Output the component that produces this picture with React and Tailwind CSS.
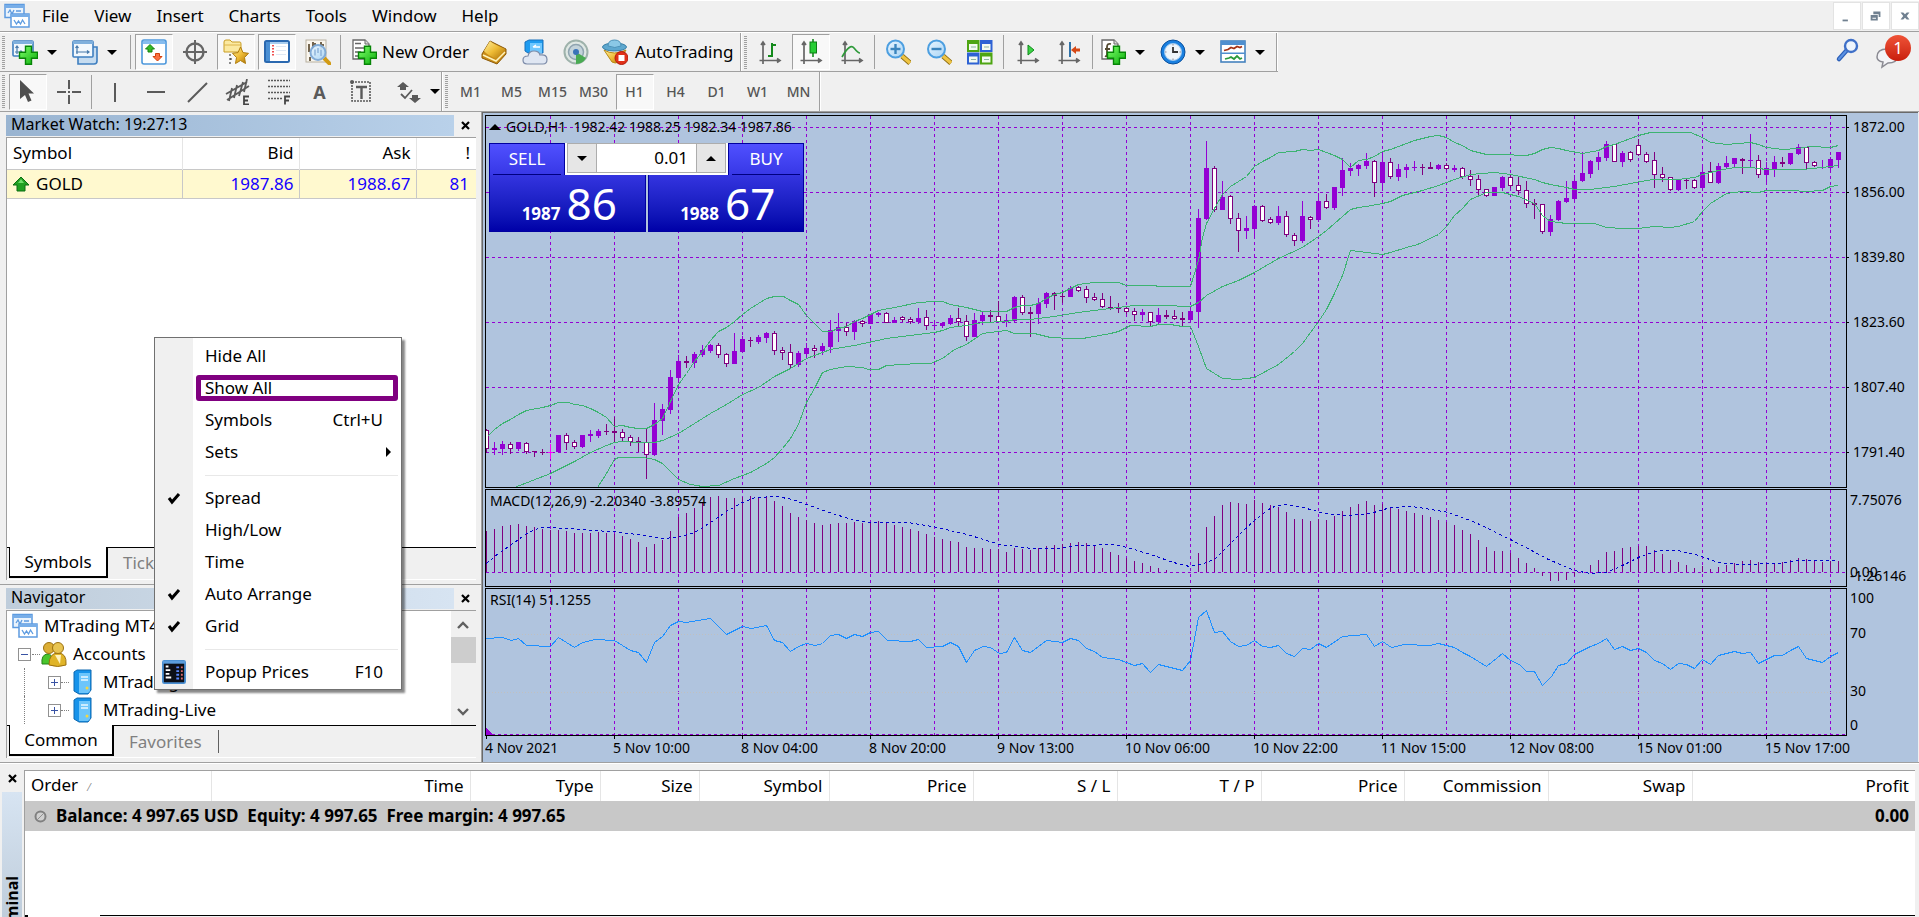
import React, { useState } from "react";

// [kind, high, body top, body bottom, low], one bar every 8px
const candles = [
  [0, 429, 430, 449, 453], [1, 442, 448, 450, 455], [1, 441, 444, 449, 455], [0, 442, 444, 449, 454], [1, 442, 442, 449, 451],
  [0, 442, 443, 452, 454], [0, 451, 451, 452, 457], [0, 449, 452, 453, 455], [2, 444, 452, 453, 459], [1, 435, 435, 452, 452],
  [0, 433, 435, 443, 450], [0, 440, 442, 447, 449], [1, 435, 435, 447, 448], [1, 430, 434, 436, 442], [1, 429, 431, 436, 438],
  [0, 424, 431, 432, 435], [0, 417, 431, 433, 442], [0, 429, 432, 438, 441], [0, 435, 437, 442, 446], [0, 437, 441, 442, 452],
  [0, 429, 442, 455, 479], [1, 403, 420, 455, 456], [1, 404, 409, 421, 435], [1, 370, 377, 410, 414], [1, 355, 361, 378, 383],
  [0, 356, 361, 363, 368], [1, 352, 354, 363, 368], [1, 345, 350, 355, 357], [1, 344, 345, 351, 353], [0, 343, 345, 355, 358],
  [0, 353, 354, 364, 367], [1, 333, 351, 364, 364], [1, 336, 339, 352, 352], [0, 337, 340, 341, 347], [1, 335, 337, 342, 344],
  [1, 332, 333, 338, 343], [0, 331, 333, 351, 355], [0, 347, 350, 353, 360], [0, 344, 352, 365, 368], [1, 351, 353, 365, 367],
  [1, 343, 348, 354, 359], [0, 345, 348, 351, 358], [1, 343, 346, 351, 355], [1, 320, 330, 347, 353], [1, 313, 327, 331, 342],
  [0, 323, 327, 332, 336], [1, 320, 321, 332, 340], [0, 320, 321, 324, 327], [1, 314, 314, 324, 324], [1, 312, 313, 315, 317],
  [0, 312, 313, 323, 323], [1, 317, 320, 323, 323], [0, 316, 317, 320, 322], [0, 317, 319, 322, 324], [1, 308, 318, 322, 324],
  [0, 310, 317, 326, 330], [1, 321, 325, 326, 330], [1, 322, 323, 326, 328], [1, 315, 318, 324, 325], [0, 308, 318, 322, 326],
  [0, 315, 321, 337, 341], [1, 313, 320, 337, 337], [1, 312, 315, 321, 325], [0, 310, 315, 317, 322], [0, 301, 316, 322, 322],
  [1, 314, 320, 322, 327], [1, 296, 297, 321, 322], [0, 295, 297, 313, 315], [0, 307, 312, 314, 337], [1, 298, 303, 314, 324],
  [1, 292, 293, 304, 308], [0, 292, 293, 296, 310], [0, 293, 296, 297, 303], [1, 286, 288, 297, 297], [0, 286, 287, 291, 292],
  [0, 286, 289, 298, 303], [0, 293, 297, 300, 301], [0, 293, 299, 307, 308], [0, 296, 307, 309, 310], [0, 303, 308, 309, 313],
  [0, 307, 308, 312, 314], [0, 308, 311, 315, 321], [1, 309, 312, 315, 321], [0, 312, 312, 322, 326], [1, 308, 315, 322, 324],
  [0, 310, 315, 317, 319], [0, 310, 316, 319, 320], [0, 312, 318, 320, 326], [1, 307, 311, 320, 322], [1, 209, 218, 312, 328],
  [1, 141, 168, 219, 220], [0, 166, 168, 210, 212], [1, 181, 197, 210, 210], [0, 195, 196, 219, 224], [0, 213, 218, 231, 252],
  [1, 216, 228, 231, 239], [1, 205, 206, 229, 237], [0, 205, 206, 221, 222], [0, 217, 219, 223, 224], [1, 206, 216, 223, 225],
  [0, 211, 216, 235, 237], [0, 233, 235, 241, 246], [1, 201, 216, 241, 243], [0, 216, 217, 220, 229], [1, 193, 201, 220, 222],
  [0, 194, 201, 208, 209], [1, 187, 187, 208, 210], [1, 158, 170, 188, 196], [1, 163, 168, 171, 176], [1, 164, 165, 169, 176],
  [1, 153, 161, 166, 169], [0, 160, 161, 183, 197], [1, 152, 162, 183, 190], [0, 158, 162, 177, 179], [1, 164, 169, 177, 181],
  [1, 164, 167, 170, 178], [1, 161, 167, 168, 171], [0, 164, 167, 168, 175], [0, 162, 167, 169, 169], [1, 164, 165, 169, 170],
  [0, 163, 165, 169, 170], [1, 165, 168, 170, 172], [0, 167, 168, 177, 179], [0, 170, 176, 180, 186], [0, 175, 179, 190, 195],
  [0, 189, 189, 196, 197], [1, 187, 187, 196, 196], [1, 176, 177, 188, 191], [0, 175, 177, 186, 188], [0, 177, 185, 191, 195],
  [0, 181, 190, 204, 208], [0, 199, 203, 205, 219], [0, 204, 204, 232, 234], [1, 215, 219, 232, 236], [1, 200, 201, 220, 221],
  [1, 181, 198, 202, 203], [1, 175, 181, 199, 201], [1, 152, 173, 181, 182], [1, 160, 161, 174, 178], [1, 152, 157, 162, 170],
  [1, 141, 144, 158, 161], [0, 144, 144, 162, 162], [1, 151, 153, 162, 167], [0, 151, 152, 160, 162], [0, 139, 145, 155, 156],
  [0, 152, 154, 162, 163], [0, 152, 160, 175, 188], [0, 167, 174, 178, 182], [0, 177, 177, 190, 191], [1, 179, 180, 190, 191],
  [0, 179, 180, 181, 189], [0, 179, 180, 188, 189], [1, 167, 172, 188, 191], [0, 162, 171, 183, 183], [1, 163, 166, 183, 184],
  [1, 156, 163, 167, 169], [1, 158, 158, 164, 167], [0, 158, 159, 161, 174], [1, 134, 160, 161, 167], [0, 155, 160, 175, 178],
  [1, 162, 168, 175, 184], [1, 156, 162, 169, 177], [0, 157, 162, 164, 167], [1, 153, 153, 164, 165], [1, 144, 147, 154, 155],
  [0, 147, 147, 163, 169], [0, 161, 162, 166, 167], [1, 160, 167, 168, 169], [1, 157, 159, 168, 171], [1, 152, 152, 160, 168],
];

const upperBand =
  "487,436 494,429 502,423 510,419 518,414 526,410 542,407 550,405 558,402 568,402 574,404 582,405 590,408 598,412 606,417 614,426 622,425 630,427 638,428 646,428 654,424 662,418 670,401 678,384 686,373 694,361 702,351 710,340 718,331 726,327 734,321 742,314 750,308 758,303 766,298 774,296 783,296 790,300 798,304 806,315 814,323 822,331 830,331 838,328 846,326 854,321 862,318 870,314 878,310 894,307 918,302 934,301 942,301 950,304 966,307 982,311 1006,311 1014,307 1022,305 1030,305 1038,303 1046,298 1054,294 1062,292 1070,288 1078,284 1094,282 1118,282 1126,285 1154,285 1158,286 1190,286 1194,273 1198,260 1202,237 1206,223 1214,208 1222,194 1230,186 1238,181 1246,176 1254,166 1262,161 1270,157 1278,152 1294,151 1302,149 1310,150 1318,149 1326,152 1334,155 1342,159 1350,167 1358,160 1366,159 1374,156 1382,151 1390,149 1406,143 1414,140 1430,136 1438,135 1446,137 1454,142 1462,145 1470,150 1478,152 1486,154 1510,154 1517,155 1526,155 1534,153 1542,149 1550,147 1558,148 1566,150 1582,153 1598,150 1606,146 1614,144 1622,141 1630,138 1638,135 1650,132 1690,132 1702,137 1710,142 1726,144 1750,142 1758,144 1766,147 1782,149 1798,148 1810,146 1830,147 1838,145";
const middleBand =
  "514,487 550,473 574,461 590,452 606,445 614,442 622,441 638,442 654,442 662,440 678,433 694,423 710,413 726,404 742,394 758,387 774,376 790,368 806,358 830,349 854,345 886,338 910,335 934,332 942,330 950,327 966,325 982,322 1006,321 1014,319 1030,319 1054,316 1078,312 1102,309 1134,305 1170,305 1182,306 1190,306 1198,302 1206,295 1222,286 1238,280 1254,272 1278,258 1302,247 1318,236 1326,230 1342,216 1350,209 1358,207 1366,206 1382,203 1390,201 1402,195 1422,190 1438,185 1454,179 1470,174 1494,172 1510,174 1534,179 1542,182 1550,184 1566,187 1574,189 1590,189 1614,186 1630,183 1646,180 1654,179 1678,179 1694,177 1702,174 1718,170 1734,167 1750,167 1766,169 1802,169 1822,167 1838,165";
const lowerBand =
  "597,487 606,473 614,459 618,457 643,457 654,459 662,463 670,471 678,479 690,484 702,486 718,485 734,478 750,472 766,463 774,457 782,448 790,438 798,424 806,402 814,388 822,372 830,369 846,366 862,367 868,369 878,369 886,365 918,363 930,363 942,358 954,349 966,344 982,333 1006,330 1014,333 1034,333 1050,337 1070,338 1082,338 1094,336 1110,333 1118,331 1130,325 1150,326 1158,324 1170,324 1182,326 1190,326 1198,346 1206,368 1222,378 1238,379 1254,377 1278,364 1294,351 1302,343 1318,321 1326,309 1334,293 1342,275 1350,250 1366,252 1382,254 1390,252 1406,247 1417,244 1438,234 1446,226 1454,215 1462,208 1470,199 1486,192 1502,192 1518,196 1534,203 1542,215 1550,221 1566,223 1594,223 1606,227 1622,228 1638,228 1654,226 1670,227 1678,226 1694,221 1702,211 1710,203 1726,193 1742,191 1758,192 1766,190 1790,190 1806,191 1822,190 1830,186 1838,185";

// histogram heights around the zero line
const macd = [
  41, 43, 46, 47, 48, 46, 45, 43, 42, 42, 41, 39, 39, 39, 40, 39, 38, 36, 33, 30, 25, 28, 32, 41, 55, 59, 64, 70, 75, 76, 74, 74, 75, 76,
  75, 75, 71, 66, 59, 55, 52, 49, 47, 48, 49, 49, 50, 49, 49, 51, 49, 47, 45, 43, 41, 38, 35, 33, 31, 30, 25, 24, 24, 23, 23, 20, 24, 23,
  22, 24, 26, 27, 28, 29, 30, 29, 27, 24, 20, 17, 14, 11, 9, 6, 4, 2, 0, 0, 0, 19, 45, 56, 67, 70, 69, 68, 72, 69, 67, 65, 60, 53, 53,
  51, 53, 52, 56, 61, 65, 68, 71, 67, 68, 65, 63, 61, 59, 57, 55, 52, 50, 47, 42, 38, 32, 25, 21, 21, 19, 14, 9, 4, -4, -9, -9, -8, -4,
  0, 7, 12, 20, 21, 24, 25, 26, 26, 22, 18, 12, 10, 7, 4, 6, 3, 5, 7, 9, 11, 12, 10, 9, 9, 10, 12, 14, 13, 12, 10, 11, 11,
];
const macdSignal =
  "486,563 498,553 514,542 526,533 540,527 572,528 590,530 613,531 636,534 661,538 677,537 694,532 710,522 726,511 742,502 755,497 776,496 792,499 806,504 829,512 854,520 870,522 907,522 932,526 967,534 999,544 1031,548 1056,548 1077,545 1114,544 1127,547 1150,554 1173,562 1189,566 1200,564 1214,559 1228,545 1241,532 1255,519 1271,507 1283,504 1299,506 1324,513 1347,515 1370,513 1390,507 1411,506 1425,508 1448,512 1475,522 1512,540 1548,559 1574,570 1590,573 1606,572 1622,565 1640,556 1658,550 1677,550 1695,554 1718,562 1741,564 1778,563 1796,560 1837,560";
const rsi =
  "486,638 502,637 511,640 518,638 526,645 550,646 558,637 574,647 582,642 595,639 614,640 630,650 638,652 646,662 654,642 662,636 670,625 678,621 686,622 710,618 726,634 742,626 751,628 766,625 774,640 782,642 790,651 798,646 806,643 815,645 822,643 830,635 838,634 846,638 854,634 862,636 870,632 878,631 887,640 910,641 918,639 926,647 942,646 950,642 958,646 966,662 974,650 983,646 990,647 999,653 1006,652 1014,637 1022,650 1030,652 1046,640 1062,642 1070,638 1078,640 1086,648 1094,651 1102,657 1118,659 1134,665 1142,663 1150,672 1158,664 1182,670 1190,660 1198,617 1206,610 1214,632 1222,631 1230,641 1238,646 1246,645 1254,640 1262,646 1270,647 1278,645 1286,653 1294,656 1302,648 1310,649 1318,643 1326,647 1342,636 1366,634 1374,646 1382,641 1391,647 1404,644 1429,645 1438,643 1454,647 1462,652 1470,656 1486,666 1502,653 1510,660 1519,664 1526,671 1534,671 1542,685 1551,676 1558,665 1566,663 1574,654 1590,646 1598,643 1606,638 1614,649 1622,646 1630,650 1638,648 1646,652 1654,660 1662,663 1670,669 1678,663 1686,664 1694,668 1702,659 1710,664 1718,655 1734,651 1742,653 1750,652 1758,663 1774,655 1782,655 1790,650 1798,646 1806,658 1822,662 1830,656 1838,652";

const Icon = ({ size = 26, children }) => (
  <svg width={size} height={size} viewBox="0 0 26 26" className="shrink-0" aria-hidden="true">
    <defs>
      <linearGradient id="gold" x1="0" y1="0" x2="1" y2="1">
        <stop offset="0" stopColor="#fff0a0" />
        <stop offset="0.5" stopColor="#eebb35" />
        <stop offset="1" stopColor="#a86d05" />
      </linearGradient>
      <linearGradient id="green" x1="0" y1="0" x2="1" y2="1">
        <stop offset="0" stopColor="#7dff6a" />
        <stop offset="1" stopColor="#0cae0c" />
      </linearGradient>
      <linearGradient id="sky" x1="0" y1="0" x2="1" y2="1">
        <stop offset="0" stopColor="#eaf6ff" />
        <stop offset="1" stopColor="#a8d4f5" />
      </linearGradient>
    </defs>
    {children}
  </svg>
);

const Plus = () => (
  <path d="M14 7h6v6h6v6h-6v6h-6v-6H8v-6h6z" fill="url(#green)" stroke="#078507" strokeWidth="1.4" transform="translate(-.5 .3)" />
);

const NewChartIcon = () => (
  <Icon>
    <rect x="1" y="2" width="20" height="15" rx="1" fill="#f2f8fd" stroke="#3f7fc0" strokeWidth="1.6" />
    <path d="M1 2h20v3H1z" fill="#7fb0dd" />
    <path d="M5 7v8M3.500 9 5 7l1.500 2M3 13h7M8.500 11.500 10 13l-1.500 1.500" stroke="#4779aa" strokeWidth="1.200" fill="none" />
    <Plus />
  </Icon>
);
const ProfilesIcon = () => (
  <Icon>
    <path d="M21 8h4v14q0 3-3 3H6v-7z" fill="#c6dcf0" stroke="#3f7fc0" strokeWidth="1.600" />
    <rect x="1" y="2" width="20" height="16" rx="1" fill="#f2f8fd" stroke="#3f7fc0" strokeWidth="1.600" />
    <path d="M1 2h20v3H1z" fill="#7fb0dd" />
    <path d="M5 7v8M3.500 9 5 7l1.500 2M4 13h13M15 11.500l2 1.500-2 1.500" stroke="#4779aa" strokeWidth="1.200" fill="none" />
  </Icon>
);
const MarketIcon = () => (
  <Icon>
    <rect x="1" y="1" width="24" height="24" rx="2" fill="#fff" stroke="#4d98dc" strokeWidth="1.600" />
    <path d="M2 2h22v3H2z" fill="#86bdf0" />
    <path d="m9 5.500 4.500 4.500h-2.500v3H7v-3H4.500z" fill="#35b925" stroke="#158010" />
    <path d="m16.500 22-4.500-4.500h2.500v-3h4v3H21z" fill="#fb7040" stroke="#d33f0c" />
  </Icon>
);
const CrosshairIcon = () => (
  <Icon>
    <circle cx="13" cy="13" r="8.500" fill="none" stroke="#666" strokeWidth="2.400" />
    <path d="M13 1v9M13 16v9M1 13h9M16 13h9M10 13h6M13 10v6" stroke="#666" strokeWidth="2" />
  </Icon>
);
const FavoritesIcon = () => (
  <Icon>
    <path d="M1 3q0-2 2-2h4l2 2h8q1 0 1 2v8H1z" fill="#fbe9a0" stroke="#c89d25" />
    <path d="M1 6h17" stroke="#dcb44a" />
    <path d="M7 15v10M7 20h4" stroke="#222" strokeDasharray="2 2" />
    <path d="m19 8 2.500 5.600 5.500.7-4 4.200 1 6-5-3-5 3 1-6-4-4.200 5.500-.7z" fill="url(#gold)" stroke="#b07d0c" transform="translate(-1.500 0)" />
  </Icon>
);
const NavigatorIcon = () => (
  <Icon>
    <rect x="1" y="2" width="24" height="21" rx="1.500" fill="#fff" stroke="#2b69b0" strokeWidth="2" />
    <path d="M2 3h4v19H2z" fill="#4b90d4" />
    <path d="M6 3h18v2H6z" fill="#a9cdee" />
    <path d="M9 6v11" stroke="#e22" strokeWidth="1.600" strokeDasharray="1.500 1.500" />
    <path d="M12 7.500h10M12 11.500h10M12 15.500h10" stroke="#dfe8f3" />
  </Icon>
);
const TesterIcon = () => (
  <Icon>
    <rect x="1" y="1" width="20" height="22" fill="#faf6ee" stroke="#b7b09f" />
    <path d="M4 5v8M8 3v7M16 3v8M5 18v4M3 7h2M8 5h3M16 6h3" stroke="#74654e" strokeWidth="2" />
    <path d="m19 19 7 7" stroke="#d29b15" strokeWidth="4" />
    <circle cx="13" cy="13.500" r="7.500" fill="url(#sky)" stroke="#7aa7d6" strokeWidth="2" opacity=".93" />
    <path d="M10 10.500v6M13 9v5M16 11v6" stroke="#8fb4da" strokeWidth="1.500" />
  </Icon>
);
const Page = () => (
  <g>
    <path d="M2 1h12l4 4v15H2z" fill="#fff" stroke="#686868" strokeWidth="1.300" />
    <path d="M14 1v4h4" fill="#ddd" stroke="#686868" />
  </g>
);
const NewOrderIcon = () => (
  <Icon>
    <Page />
    <path d="M4 4.500h6M4 9h11M4 13h6M4 17h5" stroke="#666" strokeWidth="1.600" fill="none" />
    <Plus />
  </Icon>
);
const GoldIcon = () => (
  <Icon>
    <path d="M9 2 25 10v5l-9 10L1 19v-4z" fill="#c98c17" stroke="#8b5a08" />
    <path d="M9 2q3 3 15 8l-8 10Q6 16 3 12z" fill="url(#gold)" />
    <path d="m2 16 13 6 9-9" stroke="#fff4bd" strokeWidth="1.500" fill="none" />
  </Icon>
);
const CloudIcon = () => (
  <Icon>
    <path d="m3 3 4-2h14v13H6l-3-2z" fill="#1f9cf0" stroke="#1670bd" />
    <path d="M8 4h12v10H8z" fill="#6fc8ff" />
    <path d="M11 8h7M11 8l3-2" stroke="#fff" strokeWidth="1.500" />
    <path d="M5 25q-4 0-4-4t5-4q1-5 6-5t6 4q7-1 7 4.500 0 4.500-4 4.500z" fill="#dfe6f2" stroke="#7c8ba8" strokeWidth="1.200" />
  </Icon>
);
const SignalIcon = () => (
  <Icon>
    <circle cx="13" cy="13" r="11.500" fill="#dfe8e4" stroke="#9eb2ab" strokeWidth="2" />
    <circle cx="13" cy="13" r="7.500" fill="#c3d3da" stroke="#8fa4b0" strokeWidth="1.500" />
    <path d="M13 13v12a12 12 0 0 0 10-6z" fill="#49ab52" />
    <circle cx="13" cy="13" r="3" fill="#3973b8" />
  </Icon>
);
const AutoIcon = () => (
  <Icon>
    <path d="M2 11q10 6 22 0l-7 12q-4 2-7 0z" fill="url(#gold)" stroke="#b98a15" />
    <ellipse cx="12.500" cy="8" rx="12" ry="4" fill="#5ea8cf" stroke="#357da5" />
    <path d="M6 7q0-6 6.500-6T19 7q-6 3-13 0z" fill="#8ac8e6" stroke="#4a91b8" />
    <circle cx="19.500" cy="19" r="6.500" fill="#e03018" stroke="#b31b0b" />
    <rect x="16.500" y="16" width="6" height="6" fill="#fff" />
  </Icon>
);
const Axes = () => (
  <path d="M6 3v22M2.500 21.500h20M4 6l2-3 2 3M20 19.500l3 2-3 2" stroke="#666" strokeWidth="1.700" fill="none" />
);
const BarsIcon = () => (
  <Icon>
    <Axes />
    <path d="M15 4v14M11 17h4M15 6h4" stroke="#148a1c" strokeWidth="2" />
  </Icon>
);
const CandlesIcon = () => (
  <Icon>
    <Axes />
    <path d="M15 0v18" stroke="#148a1c" strokeWidth="1.600" />
    <rect x="12" y="3" width="6.500" height="11" fill="#27cd35" stroke="#0c7c15" />
  </Icon>
);
const LineIcon = () => (
  <Icon>
    <Axes />
    <path d="M3 18Q11 4 15 9t6 5" stroke="#2e9a3a" strokeWidth="1.700" fill="none" />
  </Icon>
);
const ZoomIcon = ({ plus }) => (
  <Icon>
    <path d="m17 17 8 7" stroke="#8d6b0f" strokeWidth="5" />
    <path d="m17 17 8 7" stroke="#efc443" strokeWidth="3.400" />
    <circle cx="10.500" cy="10" r="8.500" fill="url(#sky)" stroke="#4d9fe0" strokeWidth="2" />
    <path d="M5.500 10h10" stroke="#3a84bd" strokeWidth="2.400" />
    {plus && <path d="M10.500 5v10" stroke="#3a84bd" strokeWidth="2.400" />}
  </Icon>
);
const TileIcon = () => (
  <Icon>
    <path d="M0 1h12.500v12H0zM13 13.500h12.500v12H13z" fill="#4ea512" />
    <path d="M13 1h12.500v12H13zM0 13.500h12.500v12H0z" fill="#2e62d4" />
    <path d="M2 5h8.500v6H2zM15 5h8.500v6H15zM2 17.500h8.500v6H2zM15 17.500h8.500v6H15z" fill="#f4faf0" />
    <path d="M4 8h5M17 8h5M4 20.500h5M17 20.500h5" stroke="#8db6a0" />
  </Icon>
);
const ScrollIcon = () => (
  <Icon>
    <Axes />
    <path d="m13 6 6 5-6 5z" fill="#3cd445" stroke="#118a1c" />
  </Icon>
);
const ShiftIcon = () => (
  <Icon>
    <Axes />
    <path d="M14 3v15" stroke="#2f72a8" strokeWidth="2" />
    <path d="m15 11 5-4v2.500h4v3h-4V15z" fill="#d54714" />
  </Icon>
);
const IndicatorsIcon = () => (
  <Icon>
    <Page />
    <path d="M11 5q-4-1-4 3v7q0 3-2 2M5 10h5" stroke="#554c33" strokeWidth="1.800" fill="none" />
    <Plus />
  </Icon>
);
const ClockIcon = () => (
  <Icon>
    <circle cx="13" cy="13" r="12" fill="#1a80e0" stroke="#0a4f9c" />
    <circle cx="13" cy="13" r="8.500" fill="#eff5fa" stroke="#9cc7ee" />
    <path d="M13 8v5h5" stroke="#333" strokeWidth="1.800" fill="none" />
    <path d="M13 5v1.500M13 19.500V21M5 13h1.500M19.500 13H21" stroke="#889" />
  </Icon>
);
const TemplateIcon = () => (
  <Icon>
    <rect x="1" y="2" width="24" height="21" fill="#fff" stroke="#4583bf" strokeWidth="1.600" />
    <path d="M1 2h24v4H1zM1 13.500h24V15H1z" fill="#4f8fcf" />
    <path d="m4 11.500 4-1 3-2 3 1 3-2 3 1 2-1" stroke="#a33014" strokeWidth="1.800" fill="none" />
    <path d="m5 20 4-1 2-1 3 2 3-3 3 3 2-1" stroke="#2a9a3c" strokeWidth="1.800" fill="none" />
  </Icon>
);
const SearchIcon = () => (
  <Icon>
    <path d="m4 22 8-9" stroke="#2c5fb8" strokeWidth="4.500" strokeLinecap="round" />
    <path d="m4 22 8-9" stroke="#5b91e2" strokeWidth="2" strokeLinecap="round" />
    <circle cx="16" cy="9" r="6" fill="#eef5fd" stroke="#3f70c8" strokeWidth="2.400" />
  </Icon>
);
const PlatformIcon = () => (
  <Icon>
    <rect x="1" y="1.500" width="19" height="13" fill="#eaf3fc" stroke="#5d9be0" strokeWidth="1.500" />
    <path d="M1 2h19v3H1z" fill="#78aee8" />
    <path d="m4 10 2-3 2 4 2-4M12 8h5" stroke="#5d9be0" fill="none" strokeWidth="1.300" />
    <rect x="7" y="11" width="18" height="13" fill="#fff" stroke="#5d9be0" strokeWidth="1.500" />
    <path d="M7 11h18v3H7z" fill="#78aee8" />
    <path d="m10 17 2.500 4 2-3 2 3 2-4 2.500 4" stroke="#5d9be0" fill="none" strokeWidth="1.300" />
  </Icon>
);
const PeopleIcon = () => (
  <Icon>
    <path d="M1 23q-1-9 5-10t6 10z" fill="#49c52c" stroke="#23801a" />
    <circle cx="8" cy="7" r="5.500" fill="#dcae35" stroke="#9c7110" />
    <path d="M8 24q0-12 9-12t8 12q-8 3-17 0z" fill="#e0b428" stroke="#9c7110" />
    <circle cx="17" cy="7" r="5.500" fill="#e8c452" stroke="#9c7110" />
    <path d="m14 14 5 9 1-9" fill="#fff2be" />
  </Icon>
);
const ServerIcon = () => (
  <Icon>
    <path d="m5 3 3-2h14v20l-3 4h-9l-5-3z" fill="#1793ea" stroke="#0e68b0" />
    <path d="M10 4h11v18l-2 2h-9z" fill="#6cc5fb" />
    <path d="M12 8h7M12 11h7" stroke="#e9f7ff" strokeWidth="1.600" />
    <circle cx="18" cy="19" r="1.500" fill="#f5d742" />
  </Icon>
);
const PricesIcon = () => (
  <Icon size={24}>
    <rect x="1" y="1" width="24" height="24" rx="1.500" fill="#0c0f18" stroke="#4a8fd2" strokeWidth="2" />
    <path d="M1 1h24v3H1z" fill="#5b9ddd" />
    <path d="M4 7h3M4 11h5M4 15h4M4 19h6" stroke="#fff" strokeWidth="2" />
    <path d="M17 7v14" stroke="#5a88ff" strokeWidth="3" strokeDasharray="2 2" />
    <path d="M21.500 7v14" stroke="#d86a6a" strokeWidth="2" strokeDasharray="2 2" />
  </Icon>
);

const CursorIcon = () => (
  <Icon>
    <path d="M5 1v19l5-4 3 7 3.500-1.500-3-7H19z" fill="#4f4f4f" />
  </Icon>
);
const CrossIcon = () => (
  <Icon>
    <path d="M13 1v9M13 16v9M1 13h9M16 13h9M12 13h2" stroke="#5a5a5a" strokeWidth="2" />
  </Icon>
);
const StrokeIcon = ({ d }) => (
  <Icon>
    <path d={d} stroke="#5a5a5a" strokeWidth="2" fill="none" />
  </Icon>
);
const ChannelIcon = () => (
  <Icon>
    <path d="M1 15 22 3M2 21 24 7M7 9 4 22M12 6 9 19M18 3l-4 14M22 0l-3 13" stroke="#5a5a5a" strokeWidth="1.800" />
    <path d="M24 17.500h-5v8h5M19 21.500h4" stroke="#444" strokeWidth="1.800" fill="none" />
  </Icon>
);
const FiboIcon = () => (
  <Icon>
    <path d="M2 1.500h22M2 7.500h22M2 13.500h22M2 19.500h14" stroke="#5a5a5a" strokeWidth="1.600" strokeDasharray="2 1" />
    <path d="M24 17.500h-5v8M19 21.500h4" stroke="#444" strokeWidth="1.800" fill="none" />
  </Icon>
);
const LabelIcon = () => (
  <Icon>
    <rect x="4" y="3" width="18" height="19" fill="none" stroke="#5a5a5a" strokeWidth="1.600" strokeDasharray="2 1" />
    <path d="M8 8h11M13.500 8v12" stroke="#5a5a5a" strokeWidth="2.400" />
    <circle cx="4" cy="3" r="2" fill="#5a5a5a" />
  </Icon>
);
const ShapesIcon = () => (
  <Icon>
    <path d="m8 3 6 5h-3v3H5V8H2zM20 24l-6-5h3v-3h6v3h3z" fill="#5a5a5a" />
    <path d="m6 15 4 4 7-8" stroke="#5a5a5a" strokeWidth="1.800" fill="none" />
  </Icon>
);

const DropArrow = () => <span className="h-0 w-0 border-x-5 border-t-5 border-x-transparent border-t-black" />;
const Grip = () => (
  <span className="mx-[2px] h-[33px] w-[3px] self-center bg-[repeating-linear-gradient(to_bottom,#a0a0a0_0_1px,#f0f0f0_1px_2px)]" />
);
const Sep = ({ wide }) => <span className={wide ? "mx-[3px] h-[34px] w-px self-center bg-[#a0a0a0]" : "mx-[2px] h-[34px] w-px self-center bg-[#a0a0a0]"} />;
const Edge = () => <span className="h-full w-[2px] border-l border-[#a0a0a0] bg-white" />;

const ToolButton = ({ pressed, label, children }) => (
  <button type="button" aria-label={label} aria-pressed={!!pressed} className="flex h-full w-[41px] shrink-0 items-center justify-center">
    <span
      className={
        pressed
          ? "flex h-[36px] w-[38px] items-center justify-center border border-t-[#a0a0a0] border-r-white border-b-white border-l-[#a0a0a0] bg-[#f8f8f8]"
          : "flex items-center justify-center"
      }
    >
      {children}
    </span>
  </button>
);
const DropButton = ({ label, children }) => (
  <button type="button" aria-label={label} className="flex h-full w-[60px] shrink-0 items-center gap-[9px] pl-1">
    {children}
    <DropArrow />
  </button>
);

const MenuBar = () => (
  <header className="flex h-8 items-center border-t border-b border-t-white border-b-[#a0a0a0] pl-[4px]">
    <PlatformIcon />
    <nav className="flex flex-1 gap-px">
      {["File", "View", "Insert", "Charts", "Tools", "Window", "Help"].map((m) => (
        <button type="button" key={m} className="px-[12px]">
          {m}
        </button>
      ))}
    </nav>
    <div className="flex gap-px">
      {["M4 14h6v2H4z", "M6 5h8v6h-2V8H6zM3 9h8v6H3zM5 12v1h4v-1z", "M4 6h3l2 2 2-2h3l-3 4 3 4h-3l-2-2-2 2H4l3-4z"].map((d, i) => (
        <button type="button" key={i} aria-label={["Minimize", "Restore", "Close"][i]} className="flex h-7 w-7 items-center justify-center border border-[#e3e3e3] bg-white">
          <svg width="16" height="18" viewBox="0 0 18 20">
            <path d={d} fill="#708090" fillRule="evenodd" />
          </svg>
        </button>
      ))}
    </div>
  </header>
);

const MainToolbar = () => (
  <div className="flex h-10 items-stretch">
    <div className="flex items-center border-t border-b border-t-white border-b-[#a0a0a0]">
      <Grip />
      <span className="w-px" />
      <DropButton label="New chart"><NewChartIcon /></DropButton>
      <DropButton label="Profiles"><ProfilesIcon /></DropButton>
      <Sep />
      <ToolButton label="Market Watch" pressed><MarketIcon /></ToolButton>
      <ToolButton label="Data Window"><CrosshairIcon /></ToolButton>
      <ToolButton label="Navigator" pressed><FavoritesIcon /></ToolButton>
      <ToolButton label="Terminal" pressed><NavigatorIcon /></ToolButton>
      <ToolButton label="Strategy Tester"><TesterIcon /></ToolButton>
      <Sep />
      <button type="button" className="flex w-[130px] items-center gap-[5px] pl-[8px] whitespace-nowrap">
        <NewOrderIcon />
        New Order
      </button>
      <ToolButton label="MetaEditor"><GoldIcon /></ToolButton>
      <ToolButton label="Hosting"><CloudIcon /></ToolButton>
      <ToolButton label="Signals"><SignalIcon /></ToolButton>
      <button type="button" className="flex w-[144px] items-center gap-[7px] pl-[6px] whitespace-nowrap">
        <AutoIcon />
        AutoTrading
      </button>
      <Edge />
      <Grip />
      <ToolButton label="Bar Chart"><BarsIcon /></ToolButton>
      <ToolButton label="Candlesticks" pressed><CandlesIcon /></ToolButton>
      <ToolButton label="Line Chart"><LineIcon /></ToolButton>
      <Sep />
      <ToolButton label="Zoom In"><ZoomIcon plus /></ToolButton>
      <ToolButton label="Zoom Out"><ZoomIcon /></ToolButton>
      <ToolButton label="Tile Windows"><TileIcon /></ToolButton>
      <Sep wide />
      <ToolButton label="Auto Scroll"><ScrollIcon /></ToolButton>
      <ToolButton label="Chart Shift"><ShiftIcon /></ToolButton>
      <Sep wide />
      <DropButton label="Indicators"><IndicatorsIcon /></DropButton>
      <DropButton label="Periods"><ClockIcon /></DropButton>
      <DropButton label="Templates"><TemplateIcon /></DropButton>
      <Edge />
    </div>
    <div className="flex flex-1 items-start justify-end gap-[14px] pt-[5px] pr-[8px]">
      <button type="button" aria-label="Search"><SearchIcon /></button>
      <button type="button" aria-label="Messages" className="relative h-[32px] w-[36px]">
        <svg width="26" height="26" viewBox="0 0 26 26" className="mt-[5px]">
          <path d="M2 14q0-8 10-8t10 8q0 6-9 6l-6 4 1-5q-6-1-6-5z" fill="#f3f3f6" stroke="#8a8a92" strokeWidth="1.500" />
        </svg>
        <span className="absolute -top-[2px] right-0 flex h-[26px] w-[26px] items-center justify-center rounded-full bg-linear-to-b from-[#ef5236] to-[#c91c0a] text-[17px] text-white">
          1
        </span>
      </button>
    </div>
  </div>
);

const DrawToolbar = ({ period, setPeriod }) => (
  <div className="flex h-10 items-stretch border-b border-[#a0a0a0]">
    <div className="flex items-center">
      <Grip />
      <ToolButton label="Cursor" pressed><CursorIcon /></ToolButton>
      <ToolButton label="Crosshair"><CrossIcon /></ToolButton>
      <Sep />
      <ToolButton label="Vertical Line"><StrokeIcon d="M13 4v19" /></ToolButton>
      <ToolButton label="Horizontal Line"><StrokeIcon d="M4 13h18" /></ToolButton>
      <ToolButton label="Trendline"><StrokeIcon d="M4 23 23 4" /></ToolButton>
      <ToolButton label="Equidistant Channel"><ChannelIcon /></ToolButton>
      <ToolButton label="Fibonacci Retracement"><FiboIcon /></ToolButton>
      <ToolButton label="Text"><span className="text-[18px] font-bold text-[#5a5a5a]">A</span></ToolButton>
      <ToolButton label="Text Label"><LabelIcon /></ToolButton>
      <DropButton label="Arrows"><span className="w-px" /><ShapesIcon /></DropButton>
      <Edge />
      <Grip />
      {["M1", "M5", "M15", "M30", "H1", "H4", "D1", "W1", "MN"].map((p) => (
        <button type="button" key={p} onClick={() => setPeriod(p)} className="flex h-full w-[41px] items-center justify-center">
          <span
            className={
              p === period
                ? "flex h-[36px] w-[38px] items-center justify-center border border-t-[#a0a0a0] border-r-white border-b-white border-l-[#a0a0a0] bg-[#f8f8f8] text-[14px] font-medium text-[#555]"
                : "text-[14px] font-medium text-[#555]"
            }
          >
            {p}
          </span>
        </button>
      ))}
      <Edge />
    </div>
  </div>
);

const CloseMark = () => (
  <svg width="9" height="9" viewBox="0 0 9 9">
    <path d="m1 1 7 7M8 1 1 8" stroke="#000" strokeWidth="2.200" />
  </svg>
);

const PanelTitle = ({ title, tone }) => (
  <div className="flex h-[22px]">
    <h2 className={"flex h-[21px] flex-1 items-center pb-[3px] pl-[5px] text-[16px] " + tone}>{title}</h2>
    <button type="button" aria-label={"Close " + title} className="flex h-[21px] w-[22px] items-center justify-center">
      <CloseMark />
    </button>
  </div>
);

const MarketWatch = () => (
  <section className="pt-[3px] pr-[5px] pl-[6px]">
    <PanelTitle title="Market Watch: 19:27:13" tone="bg-linear-to-r from-[#99b4d1] to-[#b9d1ea]" />
    <div className="border-t border-l border-[#a0a0a0]">
      <div className="h-[409px] bg-white">
        <table className="w-full table-fixed border-collapse">
          <thead>
            <tr className="h-[31px] border-b border-[#c8c8c8]">
              <th className="w-[175px] border-r border-[#e5e5e5] pl-[6px] text-left font-normal">Symbol</th>
              <th className="w-[117px] border-r border-[#e5e5e5] pr-[5px] text-right font-normal">Bid</th>
              <th className="w-[117px] border-r border-[#e5e5e5] pr-[5px] text-right font-normal">Ask</th>
              <th className="pr-[6px] text-right font-normal">!</th>
            </tr>
          </thead>
          <tbody>
            <tr className="h-[29px] border-b border-[#c8c8c8] bg-[#fff9cf] text-[#1400ff]">
              <td className="border-r border-[#c8c8c8] pl-[5px] text-black">
                <div className="flex items-center gap-[6px]">
                  <svg width="18" height="16" viewBox="0 0 18 16">
                    <path d="M9 1 17 9h-4v6H5V9H1z" fill="#21a021" stroke="#0b6e12" />
                    <path d="m9 3 3 4H6z" fill="#6fe06b" />
                  </svg>
                  GOLD
                </div>
              </td>
              <td className="border-r border-[#c8c8c8] pr-[5px] text-right">1987.86</td>
              <td className="border-r border-[#c8c8c8] pr-[5px] text-right">1988.67</td>
              <td className="pr-[7px] text-right">81</td>
            </tr>
          </tbody>
        </table>
      </div>
      <div className="flex h-[33px] border-t border-b border-t-black border-b-white pl-[2px]">
        <button type="button" className="-mt-px h-[31px] w-[99px] border-r-2 border-b-2 border-l border-black bg-white">Symbols</button>
        <button type="button" className="pb-[2px] pl-[15px] text-[#808080]">Tick Chart</button>
      </div>
    </div>
  </section>
);

const Expander = ({ open }) => (
  <svg width="13" height="13" viewBox="0 0 13 13" className="shrink-0">
    <rect x=".5" y=".5" width="12" height="12" fill="#fff" stroke="#919191" />
    <path d="M3 6.500h7" stroke="#3953a4" />
    {!open && <path d="M6.500 3v7" stroke="#3953a4" />}
  </svg>
);

const Navigator = () => (
  <section className="mt-[4px] border-t border-[#a0a0a0] pt-[3px] pr-[5px] pl-[6px]">
    <PanelTitle title="Navigator" tone="bg-linear-to-r from-[#bfcddb] to-[#d7e4f2]" />
    <div className="border-t border-l border-[#a0a0a0]">
      <div className="flex h-[114px] bg-white">
        <ul className="flex-1 overflow-hidden pt-px whitespace-nowrap">
          <li className="flex h-[28px] items-center gap-[6px] pl-[5px]">
            <PlatformIcon />
            MTrading MT4
          </li>
          <li className="flex h-[28px] items-center gap-[6px] pl-[11px]">
            <Expander open />
            <span className="-mx-[5px] w-[8px] border-t border-dotted border-[#808080]" />
            <PeopleIcon />
            Accounts
          </li>
          {["MTrading-Demo", "MTrading-Live"].map((name) => (
            <li key={name} className="ml-[17px] flex h-[28px] items-center gap-[8px] border-l border-dotted border-[#808080] pl-[23px]">
              <Expander />
              <span className="-mx-[8px] w-[8px] border-t border-dotted border-[#808080]" />
              <ServerIcon />
              {name}
            </li>
          ))}
        </ul>
        <div className="flex w-[25px] flex-col bg-[#f0f0f0]">
          <svg width="24" height="26" viewBox="0 0 24 26">
            <path d="m7 17 5-5 5 5" stroke="#606060" strokeWidth="2.400" fill="none" />
          </svg>
          <span className="h-[26px] bg-[#cdcdcd]" />
          <svg width="24" height="26" viewBox="0 0 24 26" className="mt-auto">
            <path d="m7 10 5 5 5-5" stroke="#606060" strokeWidth="2.400" fill="none" />
          </svg>
        </div>
      </div>
      <div className="flex h-[33px] border-t border-b border-t-black border-b-white pl-[2px]">
        <button type="button" className="-mt-px h-[31px] w-[105px] border-r-2 border-b-2 border-l border-black bg-white">Common</button>
        <button type="button" className="my-[4px] border-r border-[#606060] pr-[16px] pb-[2px] pl-[15px] text-[#808080]">Favorites</button>
      </div>
    </div>
  </section>
);

const menuItems = [
  { text: "Hide All" },
  { text: "Show All", boxed: true },
  { text: "Symbols", keys: "Ctrl+U" },
  { text: "Sets", sub: true },
  null,
  { text: "Spread", checked: true },
  { text: "High/Low" },
  { text: "Time" },
  { text: "Auto Arrange", checked: true },
  { text: "Grid", checked: true },
  null,
  { text: "Popup Prices", keys: "F10", icon: true },
];

const ContextMenu = () => (
  <div
    role="menu"
    className="absolute top-[337px] left-[154px] z-20 w-[248px] border border-[#707070] bg-linear-to-r from-[#f0f0f0] from-[38px] to-white to-[38px] pt-[2px] pb-px shadow-[3px_3px_2px_#0007]"
  >
    {menuItems.map((item, i) =>
      item ? (
        <button type="button" role="menuitem" key={i} className="flex h-[32px] w-full items-center text-left">
          <span className="flex w-[38px] items-center justify-center">
            {item.checked && (
              <svg width="14" height="14" viewBox="0 0 14 14">
                <path d="m2 7 3 4 7-8" stroke="#000" strokeWidth="3" fill="none" />
              </svg>
            )}
            {item.icon && <PricesIcon />}
          </span>
          {item.boxed ? (
            <span className="mr-[3px] ml-[3px] flex h-[26px] flex-1 items-center rounded-[3px] border-5 border-[#800080] pl-[4px]">{item.text}</span>
          ) : (
            <span className="flex-1 pl-[12px]">{item.text}</span>
          )}
          {item.keys && <span className="pr-[18px]">{item.keys}</span>}
          {item.sub && <span className="mr-[10px] h-0 w-0 border-y-5 border-l-5 border-y-transparent border-l-black" />}
        </button>
      ) : (
        <div key={i} className="flex h-[14px] items-center">
          <span className="mr-[3px] ml-[50px] h-px flex-1 bg-[#e8e8e8]" />
        </div>
      )
    )}
  </div>
);

// dashed grid; rows only where the pane has levels
const Grid = ({ rows = [] }) => (
  <g stroke="#9400d3" strokeDasharray="3 3" shapeRendering="crispEdges">
    {Array.from({ length: 21 }, (_, i) => (
      <line key={i} x1={64.5 + i * 64} x2={64.5 + i * 64} y1="0" y2="100%" />
    ))}
    {rows.map((y) => (
      <line key={y} x1="0" x2="100%" y1={y + 0.5} y2={y + 0.5} />
    ))}
  </g>
);

const PriceChart = () => (
  <svg className="block h-[371px] w-full" role="img" aria-label="GOLD H1 candlestick chart">
    <Grid rows={[11, 76, 141, 206, 271, 336]} />
    <g transform="translate(-486 -116)" shapeRendering="crispEdges">
      {candles.map(([kind, high, top, bottom, low], i) => {
        const x = 486 + i * 8;
        const color = ["#800080", "#9400d3", "#ff00ff"][kind];
        return (
          <g key={i}>
            <rect x={x} y={high} width="1" height={low - high} fill={color} />
            <rect x={x - 2} y={top} width="5" height={bottom - top} fill={color} />
            {kind === 0 && bottom - top > 2 && <rect x={x - 1} y={top + 1} width="3" height={bottom - top - 2} fill="#fff" />}
          </g>
        );
      })}
      <g fill="none" stroke="#3cb371" transform="translate(.5 .5)">
        <polyline points={upperBand} />
        <polyline points={middleBand} />
        <polyline points={lowerBand} />
      </g>
    </g>
  </svg>
);

const MacdChart = () => (
  <svg className="block h-[96px] w-full" role="img" aria-label="MACD">
    <Grid rows={[82]} />
    <g transform="translate(-486 -490)" shapeRendering="crispEdges">
      {macd.map((h, i) => (
        <rect key={i} x={486 + i * 8} y={h > 0 ? 572 - h : 572} width="1" height={Math.abs(h)} fill="#800080" />
      ))}
      <polyline points={macdSignal} fill="none" stroke="#0000cd" strokeDasharray="3 3" transform="translate(.5 .5)" />
    </g>
  </svg>
);

const RsiChart = () => (
  <svg className="block h-[146px] w-full" role="img" aria-label="RSI">
    <Grid rows={[145]} />
    <g shapeRendering="crispEdges">
      <path d="M0 45.500h1360M0 103.500h1360" stroke="#c0c0c0" strokeDasharray="1 2" />
      <path d="M0 138v8h7z" fill="#9400d3" />
      <polyline points={rsi} fill="none" stroke="#1e90ff" transform="translate(-485.500 -588.500)" />
    </g>
  </svg>
);

const OneClick = () => {
  const [volume, setVolume] = useState("0.01");
  return (
    <div className="absolute top-[27px] left-[3px] flex w-[315px] flex-col">
      <div className="flex bg-[#b0c4de]">
        <button type="button" className="h-[32px] w-[76px] border border-b-0 border-[#0000a0] bg-linear-to-b from-[#5050ff] to-[#3737e6] px-[3px] text-white">
          <span className="flex h-full items-center justify-center border-b border-[#000080]">SELL</span>
        </button>
        <div className="flex h-[32px] flex-1 border-2 border-t-0 border-white bg-white">
          <button type="button" aria-label="Decrease volume" className="flex w-[30px] items-center justify-center border border-[#adadad] bg-[#e6e6e6]">
            <DropArrow />
          </button>
          <input aria-label="Volume" value={volume} onChange={(e) => setVolume(e.target.value)} className="w-0 flex-1 border-y border-[#adadad] bg-white pr-[8px] text-right" />
          <button type="button" aria-label="Increase volume" className="flex w-[30px] items-center justify-center border border-[#adadad] bg-[#e6e6e6]">
            <span className="h-0 w-0 border-x-5 border-b-5 border-x-transparent border-b-black" />
          </button>
        </div>
        <button type="button" className="h-[32px] w-[76px] border border-b-0 border-[#0000a0] bg-linear-to-b from-[#5050ff] to-[#3737e6] px-[3px] text-white">
          <span className="flex h-full items-center justify-center border-b border-[#000080]">BUY</span>
        </button>
      </div>
      <div className="flex gap-[2px] bg-[#b0c4de] text-white">
        {[["1987", "86"], ["1988", "67"]].map(([big, small]) => (
          <button type="button" key={big} className="flex h-[57px] flex-1 items-baseline justify-center gap-[6px] border border-t-0 border-[#0000a0] bg-linear-to-b from-[#3434e0] to-[#0000a8] pl-[4px] leading-[56px]">
            <span className="text-[17px] font-bold">{big}</span>
            <span className="text-[44px]">{small}</span>
          </button>
        ))}
      </div>
    </div>
  );
};

const ChartWindow = () => (
  <main className="flex min-w-0 flex-1 flex-col border-t border-l border-[#696969] bg-[#b0c4de] pt-[2px] pl-[2px] text-[14px] leading-[22px]">
    <div className="flex">
      <div className="relative min-w-0 flex-1 border border-black">
        <PriceChart />
        <div className="absolute top-0 left-[3px] flex h-[22px] items-center gap-[5px] whitespace-pre">
          <span className="h-0 w-0 border-x-6 border-b-6 border-x-transparent border-b-black" />
          GOLD,H1  1982.42 1988.25 1982.34 1987.86
        </div>
        <div className="text-[17px]"><OneClick /></div>
      </div>
      <div className="flex w-[71px] flex-col gap-[43px] pt-px">
        {["1872.00", "1856.00", "1839.80", "1823.60", "1807.40", "1791.40"].map((p) => (
          <span key={p} className="flex items-center gap-[4px]"><i className="h-px w-[2px] bg-black" />{p}</span>
        ))}
      </div>
    </div>
    <div className="mt-px flex">
      <div className="relative min-w-0 flex-1 border border-black">
        <MacdChart />
        <span className="absolute top-0 left-[4px]">MACD(12,26,9) -2.20340 -3.89574</span>
      </div>
      <div className="flex w-[71px] flex-col pl-[3px]">
        <span>7.75076</span>
        <span className="mt-[50px]">0.00</span>
        <span className="-mt-[18px]">-1.26146</span>
      </div>
    </div>
    <div className="mt-px flex">
      <div className="relative min-w-0 flex-1 border border-black">
        <RsiChart />
        <span className="absolute top-0 left-[4px]">RSI(14) 51.1255</span>
      </div>
      <div className="-mt-px flex w-[71px] flex-col pl-[3px]">
        <span>100</span>
        <span className="mt-[13px]">70</span>
        <span className="mt-[36px]">30</span>
        <span className="mt-[12px]">0</span>
      </div>
    </div>
    <div className="flex h-[26px] overflow-hidden whitespace-nowrap">
      {["4 Nov 2021", "5 Nov 10:00", "8 Nov 04:00", "8 Nov 20:00", "9 Nov 13:00", "10 Nov 06:00", "10 Nov 22:00", "11 Nov 15:00", "12 Nov 08:00", "15 Nov 01:00", "15 Nov 17:00"].map((t) => (
        <div key={t} className="w-[128px] shrink-0">
          <span className="ml-px block h-[3px] w-px bg-black" />
          <span className="block leading-[17px]">{t}</span>
        </div>
      ))}
    </div>
  </main>
);

const columns = [
  ["Time", "w-[259px]"], ["Type", "w-[130px]"], ["Size", "w-[99px]"], ["Symbol", "w-[130px]"], ["Price", "w-[144px]"], ["S / L", "w-[144px]"],
  ["T / P", "w-[144px]"], ["Price", "w-[143px]"], ["Commission", "w-[144px]"], ["Swap", "w-[144px]"], ["Profit", ""],
];

const Terminal = () => (
  <section className="flex min-h-0 flex-1 border-t border-white pt-[6px] pr-[4px]">
    <div className="flex w-[24px] shrink-0 flex-col items-center overflow-hidden">
      <button type="button" aria-label="Close Terminal" className="flex h-[16px] shrink-0 items-center">
        <CloseMark />
      </button>
      <div className="mt-[6px] flex w-[20px] flex-1 justify-center overflow-hidden bg-linear-to-b from-[#d7e4f2] to-[#bfcddb] pt-[84px]">
        <h2 className="h-max rotate-180 text-[16px] leading-[20px] font-bold [writing-mode:vertical-rl]">Terminal</h2>
      </div>
    </div>
    <div className="flex flex-1 flex-col border-t border-l border-[#a0a0a0] bg-white">
      <table className="w-full table-fixed border-collapse">
        <thead>
          <tr className="h-[30px]">
            <th className="w-[186px] border-r border-[#e5e5e5] pl-[6px] text-left font-normal">
              Order <span className="pl-[6px] text-[10px] text-[#808080]">⁄</span>
            </th>
            {columns.map(([name, width], i) => (
              <th key={i} className={"border-[#e5e5e5] pr-[6px] text-right font-normal not-last:border-r " + width}>{name}</th>
            ))}
          </tr>
        </thead>
        <tbody>
          <tr className="h-[30px] bg-[#c8c8c8] font-bold">
            <td colSpan={11}>
              <div className="flex items-center gap-[9px] pl-[9px] whitespace-pre">
                <svg width="13" height="13" viewBox="0 0 13 13">
                  <circle cx="6.500" cy="6.500" r="5" fill="#d0d0d0" stroke="#808080" strokeWidth="2" />
                  <path d="m3 10 7-7" stroke="#909090" />
                </svg>
                Balance: 4 997.65 USD  Equity: 4 997.65  Free margin: 4 997.65
              </div>
            </td>
            <td className="pr-[6px] text-right">0.00</td>
          </tr>
        </tbody>
      </table>
      <div className="mt-auto flex h-[2px] gap-[72px]">
        <span className="w-[3px] bg-black" />
        <span className="flex-1 border-t border-black bg-[#f0f0f0]" />
      </div>
    </div>
  </section>
);

const App = () => {
  const [period, setPeriod] = useState("H1");

  return (
    <div className="relative flex h-screen flex-col overflow-hidden bg-[#f0f0f0] font-['Noto_Sans','Open_Sans',sans-serif] text-[17px] leading-[24px] text-black">
      <MenuBar />
      <MainToolbar />
      <DrawToolbar period={period} setPeriod={setPeriod} />
      <div className="flex border-b border-[#a0a0a0] pr-px">
        <aside className="w-[482px] shrink-0 border-r border-[#a0a0a0]">
          <MarketWatch />
          <Navigator />
        </aside>
        <ChartWindow />
      </div>
      <Terminal />
      <ContextMenu />
    </div>
  );
};
export default App;
